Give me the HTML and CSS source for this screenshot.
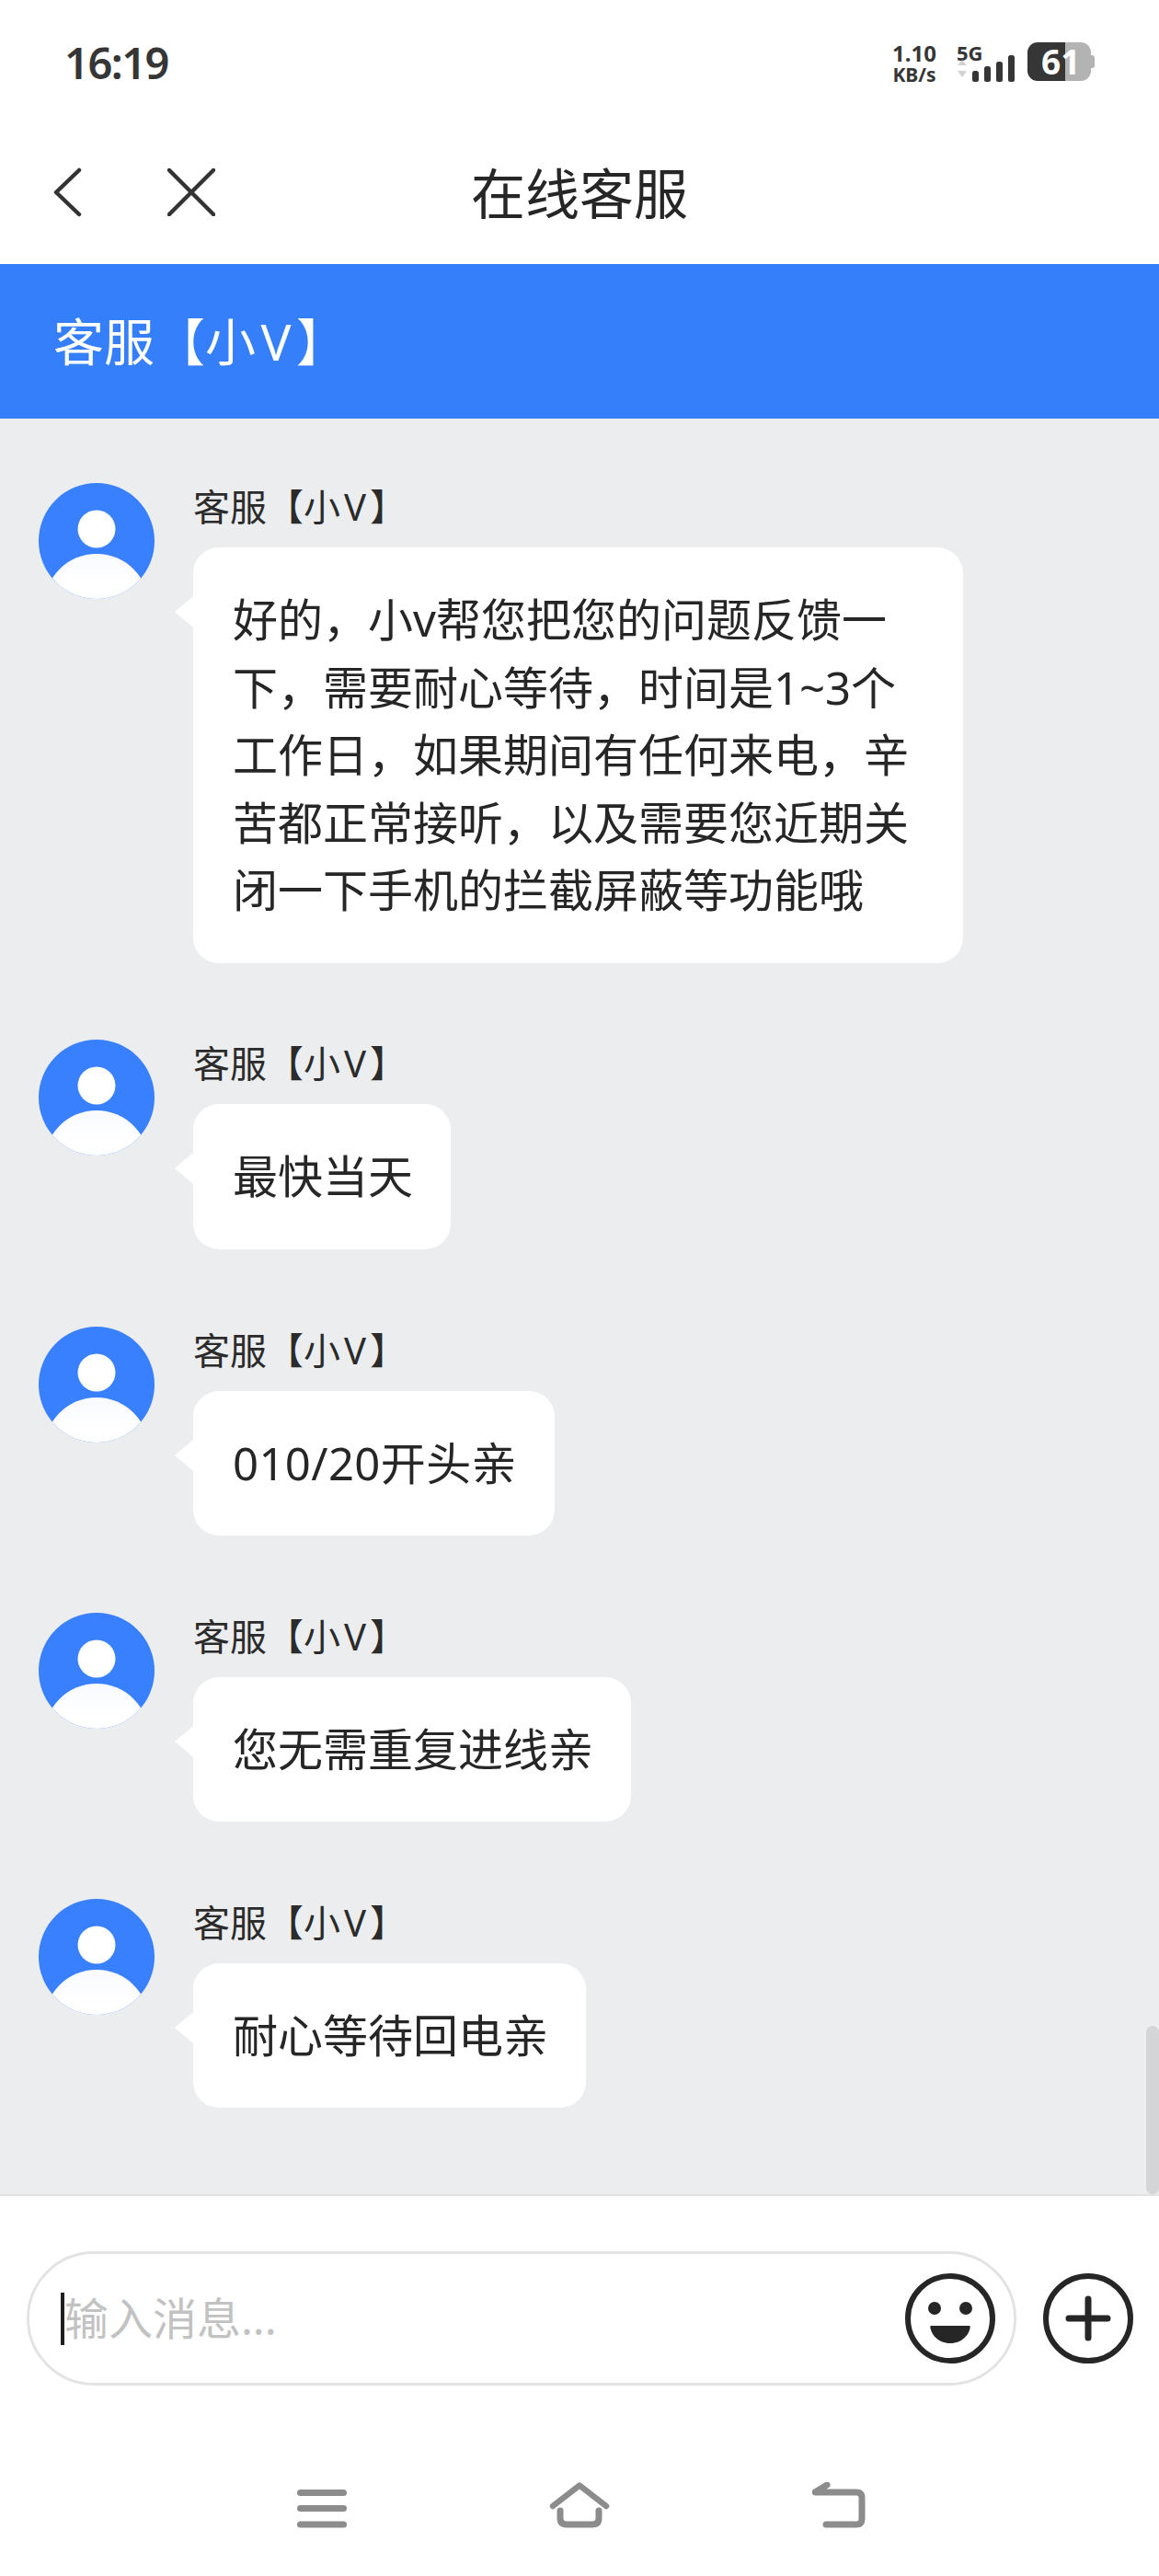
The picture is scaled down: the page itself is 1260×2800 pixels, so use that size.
FILE: index.html
```html
<!DOCTYPE html>
<html lang="zh-CN">
<head>
    <meta charset="UTF-8">
    <meta name="viewport" content="width=device-width, initial-scale=1.0">
    <title>在线客服</title>
    <link rel="stylesheet" href="styles.css">
</head>
<body>
    <svg class="svg-defs" width="0" height="0">
        <defs>
            <linearGradient id="bodyFade" x1="0" y1="0" x2="0" y2="1">
                <stop offset="0" stop-color="#fafbff"/>
                <stop offset="0.35" stop-color="#ffffff"/>
                <stop offset="0.85" stop-color="#e9f0fe"/>
            </linearGradient>
            <clipPath id="avatarClip"><circle cx="63" cy="63" r="63"/></clipPath>
            <symbol id="avatar" viewBox="0 0 126 126">
                <circle cx="63" cy="63" r="63" fill="#3880fd"/>
                <circle cx="63" cy="50" r="20.5" fill="#fff"/>
                <g clip-path="url(#avatarClip)">
                    <circle cx="63" cy="134" r="57" fill="url(#bodyFade)"/>
                </g>
            </symbol>
        </defs>
    </svg>

    <div class="phone">
        <div class="status-bar">
            <span class="clock">16:19</span>
            <div class="status-right">
                <div class="net-speed">
                    <span class="speed-num">1.10</span>
                    <span class="speed-unit">KB/s</span>
                </div>
                <div class="signal">
                    <span class="signal-label">5G</span>
                    <svg class="signal-icon" width="64" height="30" viewBox="0 0 64 30">
                        <path d="M1 12 L6 6 L11 12 Z M1 18 L11 18 L6 25 Z" fill="#d2d2d2"/>
                        <rect x="17" y="18" width="7" height="12" rx="2.5" fill="#363636"/>
                        <rect x="30" y="13" width="7" height="17" rx="2.5" fill="#363636"/>
                        <rect x="43" y="8" width="7" height="22" rx="2.5" fill="#363636"/>
                        <rect x="56" y="1" width="7" height="29" rx="2.5" fill="#363636"/>
                    </svg>
                </div>
                <div class="battery">
                    <div class="battery-fill"></div>
                    <div class="battery-empty"></div>
                    <div class="battery-nub"></div>
                    <span class="battery-num">61</span>
                </div>
            </div>
        </div>

        <div class="nav-bar">
            <div class="nav-left">
                <svg width="32" height="54" viewBox="0 0 32 54"><path d="M29 3 L4 27 L29 51" fill="none" stroke="#333" stroke-width="4.5" stroke-linecap="round" stroke-linejoin="round"/></svg>
                <svg width="52" height="52" viewBox="0 0 52 52"><path d="M2 2 L50 50 M50 2 L2 50" fill="none" stroke="#333" stroke-width="4.5" stroke-linecap="round"/></svg>
            </div>
            <h1 class="nav-title">在线客服</h1>
            <div></div>
        </div>

        <div class="service-bar">客服【小<span class="name-v">V</span>】</div>

        <div class="chat">
            <div class="message">
                <svg class="avatar"><use href="#avatar"/></svg>
                <div class="message-body">
                    <div class="sender">客服【小<span class="name-v">V</span>】</div>
                    <div class="bubble bubble-wide">好的，小v帮您把您的问题反馈一<br>下，需要耐心等待，时间是1~3个<br>工作日，如果期间有任何来电，辛<br>苦都正常接听，以及需要您近期关<br>闭一下手机的拦截屏蔽等功能哦</div>
                </div>
            </div>
            <div class="message">
                <svg class="avatar"><use href="#avatar"/></svg>
                <div class="message-body">
                    <div class="sender">客服【小<span class="name-v">V</span>】</div>
                    <div class="bubble">最快当天</div>
                </div>
            </div>
            <div class="message">
                <svg class="avatar"><use href="#avatar"/></svg>
                <div class="message-body">
                    <div class="sender">客服【小<span class="name-v">V</span>】</div>
                    <div class="bubble bubble-num">010/20开头亲</div>
                </div>
            </div>
            <div class="message">
                <svg class="avatar"><use href="#avatar"/></svg>
                <div class="message-body">
                    <div class="sender">客服【小<span class="name-v">V</span>】</div>
                    <div class="bubble">您无需重复进线亲</div>
                </div>
            </div>
            <div class="message">
                <svg class="avatar"><use href="#avatar"/></svg>
                <div class="message-body">
                    <div class="sender">客服【小<span class="name-v">V</span>】</div>
                    <div class="bubble">耐心等待回电亲</div>
                </div>
            </div>
            <div class="scroll-thumb"></div>
        </div>

        <div class="footer">
            <div class="input-row">
                <div class="input-box">
                    <div class="input-text">
                        <span class="caret"></span>
                        <span class="placeholder">输入消息...</span>
                    </div>
                    <svg width="98" height="98" viewBox="0 0 98 98">
                        <circle cx="49" cy="49" r="46" fill="none" stroke="#262626" stroke-width="6"/>
                        <circle cx="32" cy="38" r="7" fill="#262626"/>
                        <circle cx="66" cy="38" r="7" fill="#262626"/>
                        <path d="M28 57 H70 Q71 57 70.5 60 C68 70 59 76 49 76 C39 76 30 70 27.5 60 Q27 57 28 57 Z" fill="#262626"/>
                    </svg>
                </div>
                <svg width="98" height="98" viewBox="0 0 98 98">
                    <circle cx="49" cy="49" r="46" fill="none" stroke="#262626" stroke-width="6"/>
                    <path d="M49 28 V70 M28 49 H70" fill="none" stroke="#262626" stroke-width="7" stroke-linecap="round"/>
                </svg>
            </div>
            <div class="home-bar">
                <svg width="54" height="50" viewBox="0 0 54 50">
                    <path d="M3.5 11.5 H50.500 M3.500 28.500 H50.500 M3.500 46 H50.500" fill="none" stroke="#8c8c8c" stroke-width="7" stroke-linecap="round"/>
                </svg>
                <svg width="68" height="50" viewBox="0 0 68 50">
                    <path d="M5 26 L34 3.500 L63 26" fill="none" stroke="#8c8c8c" stroke-width="6.500" stroke-linecap="round" stroke-linejoin="round"/>
                    <path d="M13 31 V39 Q13 46 20 46 H48 Q55 46 55 39 V31" fill="none" stroke="#8c8c8c" stroke-width="7" stroke-linecap="round"/>
                </svg>
                <svg width="58" height="50" viewBox="0 0 58 50">
                    <path d="M16 3 L3 11 H48 Q54 11 54 17 V40 Q54 46 48 46 H15" fill="none" stroke="#8c8c8c" stroke-width="7" stroke-linecap="round" stroke-linejoin="round"/>
                </svg>
            </div>
        </div>
    </div>
</body>
</html>
```

FILE: styles.css
```css
* {
    margin: 0;
    padding: 0;
    box-sizing: border-box;
    font-family: "Noto Sans", "Noto Sans CJK SC", sans-serif;
}

body {
    background: #fff;
    color: #262626;
}

.svg-defs {
    display: block;
    height: 0;
}

.phone {
    width: 1260px;
    height: 2800px;
    display: flex;
    flex-direction: column;
    overflow: hidden;
}

/* status bar */
.status-bar {
    height: 130px;
    padding: 46px 70px 0 70px;
    display: flex;
    justify-content: space-between;
    align-items: flex-start;
    color: #363636;
}

.clock {
    font-size: 47px;
    line-height: 44px;
    font-weight: 600;
    letter-spacing: -1.5px;
}

.status-right {
    display: flex;
    align-items: flex-start;
}

.net-speed {
    width: 70px;
    margin-right: 11px;
    display: flex;
    flex-direction: column;
    align-items: center;
    font-weight: 700;
}

.speed-num {
    font-size: 24px;
    line-height: 24px;
}

.speed-unit {
    font-size: 21px;
    line-height: 22px;
}

.signal {
    position: relative;
    width: 64px;
    height: 44px;
}

.signal-label {
    display: block;
    font-size: 22px;
    line-height: 22px;
    font-weight: 700;
}

.signal-icon {
    position: absolute;
    left: 0;
    top: 13px;
}

.battery {
    position: relative;
    display: flex;
    align-items: center;
    margin-left: 13px;
    height: 42px;
}

.battery-fill {
    width: 41px;
    height: 42px;
    background: #363636;
    border-radius: 11px 0 0 11px;
}

.battery-empty {
    width: 28px;
    height: 42px;
    background: #b3b3b3;
    border-radius: 0 11px 11px 0;
}

.battery-nub {
    width: 4px;
    height: 14px;
    background: #b3b3b3;
    border-radius: 0 3px 3px 0;
}

.battery-num {
    position: absolute;
    left: 15px;
    top: 0;
    font-size: 37px;
    line-height: 42px;
    font-weight: 700;
    color: #fff;
}

/* title bar */
.nav-bar {
    height: 157px;
    display: grid;
    grid-template-columns: 1fr auto 1fr;
    align-items: center;
}

.nav-left {
    display: flex;
    align-items: center;
    gap: 93px;
    padding-left: 57px;
}

.nav-title {
    font-size: 59px;
    font-weight: 400;
    line-height: 80px;
    padding-top: 2px;
    color: #262626;
}

.service-bar {
    height: 168px;
    padding-left: 58px;
    background: #367ffb;
    color: #fff;
    font-size: 55px;
    line-height: 168px;
}

.name-v {
    margin: 0 0.1em;
}

/* chat list */
.chat {
    position: relative;
    height: 1932px;
    padding: 70px 0 0 42px;
    background: #ecedef;
    border-bottom: 2px solid #e2e2e2;
}

.message {
    display: flex;
    gap: 42px;
    margin-bottom: 83.500px;
}

.avatar {
    width: 126px;
    height: 126px;
    flex-shrink: 0;
}

.message-body {
    display: flex;
    flex-direction: column;
    align-items: flex-start;
}

.sender {
    font-size: 40px;
    line-height: 52px;
    margin-bottom: 18px;
    color: #2b2b2b;
}

.bubble {
    position: relative;
    padding: 42px 41px 42px 43px;
    background: #fff;
    border-radius: 28px;
    font-size: 49px;
    line-height: 73.600px;
    white-space: nowrap;
    color: #262626;
}

.bubble::before {
    content: "";
    position: absolute;
    left: -20px;
    top: 53px;
    border-top: 17px solid transparent;
    border-bottom: 17px solid transparent;
    border-right: 20px solid #fff;
}

.bubble-wide {
    width: 837px;
}

.bubble-num {
    letter-spacing: 0.4px;
}

.scroll-thumb {
    position: absolute;
    right: 0;
    bottom: 0;
    width: 14px;
    height: 183px;
    background: #d4d5d7;
    border-radius: 7px;
}

/* input + system nav */
.footer {
    flex: 1;
    background: #fff;
}

.input-row {
    display: flex;
    align-items: center;
    gap: 29px;
    padding: 60px 0 0 29px;
}

.input-box {
    width: 1076px;
    height: 146px;
    padding: 0 20px 0 34px;
    border: 3px solid #e3e3e3;
    border-radius: 73px;
    display: flex;
    align-items: center;
    justify-content: space-between;
}

.input-text {
    display: flex;
    align-items: center;
}

.caret {
    width: 4px;
    height: 57px;
    background: #1f1f1f;
}

.placeholder {
    font-size: 48px;
    line-height: 60px;
    color: #c2c2c2;
}

.home-bar {
    display: flex;
    align-items: flex-start;
    gap: 219px;
    padding: 105px 0 0 323px;
}
```
